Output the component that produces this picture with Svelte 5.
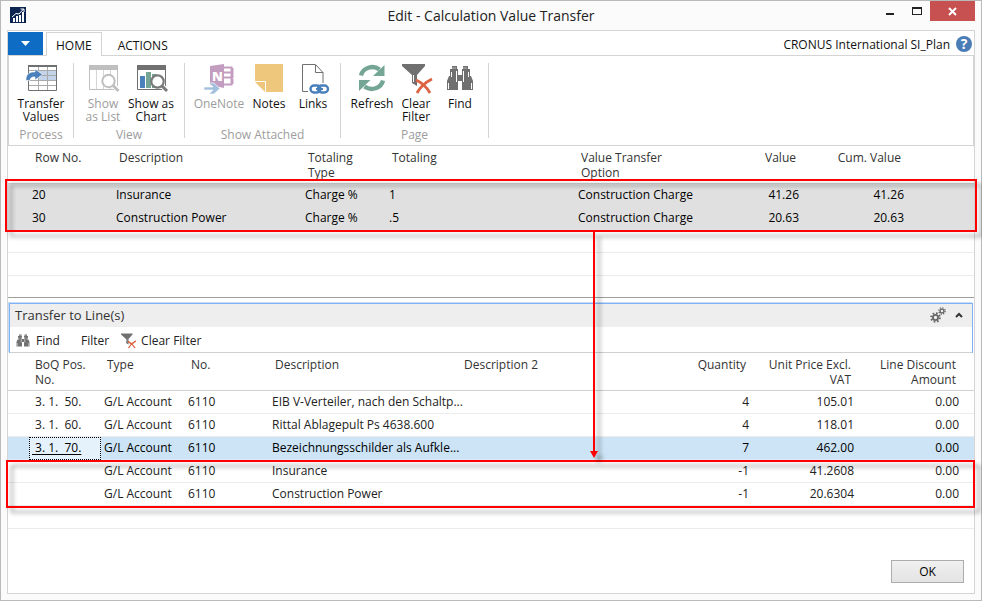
<script>
  const charges = [
    { row: '20', desc: 'Insurance', type: 'Charge %', totaling: '1', option: 'Construction Charge', value: '41.26', cum: '41.26' },
    { row: '30', desc: 'Construction Power', type: 'Charge %', totaling: '.5', option: 'Construction Charge', value: '20.63', cum: '20.63' }
  ];
  const lines = [
    { pos: ' 3. 1.  50.', type: 'G/L Account', no: '6110', desc: 'EIB V-Verteiler, nach den Schaltp...', qty: '4', price: '105.01', disc: '0.00' },
    { pos: ' 3. 1.  60.', type: 'G/L Account', no: '6110', desc: 'Rittal Ablagepult Ps 4638.600', qty: '4', price: '118.01', disc: '0.00' },
    { pos: ' 3. 1.  70.', type: 'G/L Account', no: '6110', desc: 'Bezeichnungsschilder als Aufkle...', qty: '7', price: '462.00', disc: '0.00', active: true },
    { pos: '', type: 'G/L Account', no: '6110', desc: 'Insurance', qty: '-1', price: '41.2608', disc: '0.00' },
    { pos: '', type: 'G/L Account', no: '6110', desc: 'Construction Power', qty: '-1', price: '20.6304', disc: '0.00' }
  ];
  const groups = [
    { name: 'Process', kind: 'process', items: [{ icon: 'transfer', label: ['Transfer', 'Values'] }] },
    { name: 'View', kind: 'view', items: [
      { icon: 'list', label: ['Show', 'as List'], disabled: true },
      { icon: 'chart', label: ['Show as', 'Chart'] }
    ] },
    { name: 'Show Attached', kind: 'attached', items: [
      { icon: 'onenote', label: ['OneNote'], disabled: true },
      { icon: 'notes', label: ['Notes'] },
      { icon: 'links', label: ['Links'] }
    ] },
    { name: 'Page', kind: 'page', items: [
      { icon: 'refresh', label: ['Refresh'] },
      { icon: 'clear', label: ['Clear', 'Filter'] },
      { icon: 'find', label: ['Find'] }
    ] }
  ];
</script>

{#snippet icon(name, size)}
  <svg width={size} height={size} viewBox="0 0 32 32" aria-hidden="true">
    {#if name === 'transfer'}
      <path d="M13 7h18v10H13z" fill="#c3d4ea" />
      <path d="M4 7.500h27M4 12.500h27M4 17.500h27M4 22.500h27M13.500 3v24M22.500 3v24" stroke="#a9a9a9" fill="none" />
      <path d="M3.500 2.500h28v25h-28z" stroke="#707070" fill="none" />
      <path d="M3 3h29" stroke="#707070" stroke-width="2" />
      <path d="M1 17.500C.5 11 5 8.500 10 9V6l7.500 5.500L10 17v-3c-3-.5-5 .8-5 3.500z" fill="#4a80bb" stroke="#fff" stroke-width=".6" />
    {:else if name === 'list'}
      <path d="M2.500 2.500h28v24h-28z" stroke="#bfbfbf" fill="#fff" />
      <path d="M2 2h29v5H2z" fill="#bfbfbf" />
      <path d="M9.500 7v19M16.500 7v19M23.500 7v19" stroke="#d6d6d6" />
      <path d="M25.500 21.500l7 7" stroke="#fff" stroke-width="5" />
      <circle cx="21.500" cy="18" r="6.200" fill="#fff" stroke="#bfbfbf" stroke-width="2" />
      <path d="M26 22.500l5.500 5.500" stroke="#bfbfbf" stroke-width="3" />
    {:else if name === 'chart'}
      <path d="M2.500 2.500h28v24h-28z" stroke="#707070" fill="#fff" />
      <path d="M2 2h29v5H2z" fill="#707070" />
      <path d="M5 13h5v12H5z" fill="#4a80bb" />
      <path d="M11 9h5v16h-5zM17 11h5v14h-5z" fill="#75a695" />
      <path d="M26 22l6 6" stroke="#fff" stroke-width="5" />
      <circle cx="22.500" cy="18.500" r="6.200" fill="#fff" stroke="#7a7a7a" stroke-width="2.200" />
      <path d="M27 23l5 5" stroke="#7a7a7a" stroke-width="3" />
    {:else if name === 'onenote'}
      <path d="M21 4.500h7.500v17H21M21 9.500h9.500M21 14.500h9.500M29.500 5v4M29.500 10v4M29.500 16v5" fill="none" stroke="#c39dc0" stroke-width="2" />
      <path d="M7 3l14-2v24L7 22z" fill="#c39dc0" />
      <text x="9" y="18" font-family="Open Sans, sans-serif" font-size="13" font-weight="800" fill="#fff">N</text>
      <path d="M1 24h9l-4-4h5l6 5.500-6 5.500H6l4-4H1z" fill="#a4c0df" stroke="#fff" stroke-width=".6" />
    {:else if name === 'notes'}
      <path d="M2 1h28v28H2z" fill="#eec77c" />
      <path d="M2 18.500h10.500V29" stroke="#fff" fill="none" />
      <path d="M2 19l10 10H2z" fill="#fff" />
      <path d="M3 19h9v9z" fill="#eec77c" />
    {:else if name === 'links'}
      <path d="M11 28.500H5.500v-27h13l7.500 8V20M18.500 2v7.500H26" fill="none" stroke="#707070" />
      <g fill="none" stroke="#4a80bb" stroke-width="2.400">
        <rect x="13.500" y="22.500" width="10" height="7" rx="3.500" />
        <rect x="21" y="22.500" width="10" height="7" rx="3.500" />
      </g>
      <path d="M19 26h7" stroke="#4a80bb" stroke-width="2" />
    {:else if name === 'refresh'}
      <path d="M5 12.500A11.500 10.500 0 0 1 23.500 6.500" fill="none" stroke="#75a695" stroke-width="4.400" />
      <path d="M28.500 2v11H17z" fill="#75a695" />
      <path d="M27 17.500A11.500 10.500 0 0 1 8.500 23.500" fill="none" stroke="#75a695" stroke-width="4.400" />
      <path d="M3 28V17h11.500z" fill="#75a695" />
    {:else if name === 'clear'}
      <path d="M2 1h23v2l-8 9v11l-5-3v-8L2 3z" fill="#707070" />
      <path d="M13.500 12v7" stroke="#fff" />
      <path d="M16 17q9 4 14 13M32 16q-10 5-15 14" fill="none" stroke="#dc6443" stroke-width="2.800" />
    {:else if name === 'find'}
      <path d="M8 3h5v3h1v6h4V6h1V3h5v3h2v7h1l2 5v9H18v-9h-4v9H3v-9l2-5h1V6h2z" fill="#707070" />
      <path d="M4.500 20v6M27.500 20v6M7.500 9v5M24.500 9v5M12.500 8v11M19.500 8v11" stroke="#fff" />
      <path d="M8.500 5h4M19.500 5h4" stroke="#fff" stroke-dasharray="1 1" />
    {/if}
  </svg>
{/snippet}

<div class="window">
  <header class="titlebar">
    <svg class="logo" width="16" height="16" viewBox="0 0 16 16" aria-hidden="true">
      <path d="M0 0h16v16H0z" fill="#0b2450" />
      <path d="M3 11h2v4H3zM6 9h2v6H6zM9 8h2v7H9zM12 5h2v10h-2z" fill="#fff" />
      <path d="M2 10l4-3.500 3 .5 4.500-5M10.500 2H14v3" stroke="#fff" fill="none" />
    </svg>
    <h1>Edit - Calculation Value Transfer</h1>
    <div class="controls">
      <button aria-label="Minimize"><svg width="10" height="10"><path d="M1 7h8v2H1z" fill="#222" /></svg></button>
      <button aria-label="Maximize"><svg width="10" height="10"><path d="M0 1h10v8H0zM1 3v5h8V3z" fill="#222" fill-rule="evenodd" /></svg></button>
      <button class="close" aria-label="Close"><svg width="9" height="9"><path d="M1 1l7 7M8 1L1 8" stroke="#fff" stroke-width="2" /></svg></button>
    </div>
  </header>

  <main class="panel">
    <nav class="tabs">
      <button class="menu" aria-label="Application menu"><svg width="9" height="5"><path d="M0 0h9L4.500 5z" fill="#fff" /></svg></button>
      <button class="tab current">HOME</button>
      <button class="tab">ACTIONS</button>
      <span class="company">CRONUS International SI_Plan</span>
      <button class="help" aria-label="Help">?</button>
    </nav>

    <div class="ribbon">
      {#each groups as group}
        <section class="group {group.kind}">
          <div class="commands">
            {#each group.items as item}
              <button class="command {item.icon}" disabled={item.disabled}>
                {@render icon(item.icon, 32)}
                <span>{item.label[0]}{#if item.label[1]}<br />{item.label[1]}{/if}</span>
              </button>
            {/each}
          </div>
          <div class="caption">{group.name}</div>
        </section>
      {/each}
    </div>

    <div class="charges">
      <table>
        <colgroup><col class="w-lead" /><col class="w-s" /><col class="w-l" /><col class="w-s" /><col class="w-l" /><col class="w-m" /><col class="w-value" /><col class="w-m" /><col /></colgroup>
        <thead>
          <tr><th></th><th>Row No.</th><th>Description</th><th>Totaling<br />Type</th><th>Totaling</th><th>Value Transfer<br />Option</th><th class="num">Value</th><th class="num">Cum. Value</th><th></th></tr>
        </thead>
        <tbody>
          {#each charges as c}
            <tr class="marked"><td></td><td>{c.row}</td><td>{c.desc}</td><td>{c.type}</td><td>{c.totaling}</td><td>{c.option}</td><td class="num">{c.value}</td><td class="num">{c.cum}</td><td></td></tr>
          {/each}
          <tr><td colspan="9"></td></tr>
          <tr><td colspan="9"></td></tr>
          <tr class="last"><td colspan="9"></td></tr>
        </tbody>
      </table>
      <div class="callout source"></div>
      <svg class="arrow" width="8" height="226" aria-hidden="true"><path d="M3 0h2v219h3l-4 7-4-7h3z" fill="#f00" /></svg>
    </div>

    <section class="part">
      <div class="part-head">
        <div class="part-title">
          <h2>Transfer to Line(s)</h2>
          <button aria-label="Customize">
            <svg width="16" height="16" viewBox="0 0 16 16" fill="none" stroke="#666">
              <circle cx="5.500" cy="10.500" r="2.600" stroke-width="1.800" />
              <circle cx="5.500" cy="10.500" r="4.400" stroke-width="1.800" stroke-dasharray="1.700 1.755" />
              <circle cx="12" cy="4" r="1.900" stroke-width="1.300" />
              <circle cx="12" cy="4" r="3.200" stroke-width="1.300" stroke-dasharray="1.250 1.263" />
            </svg>
          </button>
          <button aria-label="Collapse"><svg width="8" height="6"><path d="M1 5l3-3 3 3" stroke="#333" stroke-width="2" fill="none" /></svg></button>
        </div>
        <div class="toolbar">
          <button class="t-find">{@render icon('find', 16)}Find</button>
          <button class="t-filter">Filter</button>
          <button>{@render icon('clear', 16)}Clear Filter</button>
        </div>
      </div>
      <table>
        <colgroup><col class="w-lead" /><col class="w-pos" /><col class="w-s" /><col class="w-s" /><col class="w-l" /><col class="w-l" /><col class="w-m" /><col class="w-m" /><col class="w-m" /><col /></colgroup>
        <thead>
          <tr><th></th><th>BoQ Pos.<br />No.</th><th>Type</th><th>No.</th><th>Description</th><th>Description 2</th><th class="num">Quantity</th><th class="num">Unit Price Excl.<br />VAT</th><th class="num">Line Discount<br />Amount</th><th></th></tr>
        </thead>
        <tbody>
          {#each lines as l}
            <tr class:active={l.active}>
              <td></td>
              <td class="pos">{#if l.active}<a href="#line">{l.pos}</a>{:else}{l.pos}{/if}</td>
              <td>{l.type}</td><td>{l.no}</td><td>{l.desc}</td><td></td>
              <td class="num">{l.qty}</td><td class="num">{l.price}</td><td class="num">{l.disc}</td><td></td>
            </tr>
          {/each}
          <tr><td colspan="10"></td></tr>
        </tbody>
      </table>
      <div class="callout target"></div>
    </section>

    <footer><button class="ok">OK</button></footer>
  </main>
</div>

<style>
  :global(body) { margin: 0; }
  .window {
    box-sizing: border-box;
    min-height: 100vh;
    display: flex;
    flex-direction: column;
    padding: 0 6px 6px;
    border: 1px solid #b9b9b9;
    background: #fbfbfb;
    font-family: "Open Sans", "Noto Sans", sans-serif;
    font-size: 12px;
    color: #222;
  }
  button {
    margin: 0;
    padding: 0;
    border: 0;
    background: none;
    font: inherit;
    color: inherit;
  }
  svg { display: block; }

  .titlebar {
    display: grid;
    grid-template-columns: 1fr auto 1fr;
    height: 29px;
  }
  .logo { margin: 6px 0 0 3px; }
  h1 {
    margin: 0;
    font-size: 14px;
    font-weight: 400;
    line-height: 29px;
  }
  .controls {
    display: flex;
    justify-content: flex-end;
    align-items: flex-start;
  }
  .controls button {
    display: flex;
    align-items: center;
    justify-content: center;
    width: 27px;
    height: 20px;
  }
  .controls .close {
    width: 45px;
    background: #c75050;
  }

  .panel {
    flex: 1;
    display: flex;
    flex-direction: column;
    border: 1px solid #d4d4d4;
    background: #fff;
  }
  .tabs {
    display: flex;
    align-items: flex-end;
    height: 24px;
    color: #111;
  }
  .menu {
    display: flex;
    align-items: center;
    justify-content: center;
    width: 35px;
    height: 23px;
    margin-right: 3px;
    background: #0f6cc5;
  }
  .tab {
    height: 24px;
    padding: 4px 16px 0;
  }
  .tab.current {
    position: relative;
    box-sizing: border-box;
    padding: 2px 9px 0;
    margin-bottom: -1px;
    border: 1px solid #d4d4d4;
    border-bottom: 0;
    background: #fff;
  }
  .company {
    margin-left: auto;
    line-height: 20px;
  }
  .help {
    width: 16px;
    height: 16px;
    margin: 0 2px 3px 6px;
    border-radius: 50%;
    background: #4a7db5;
    color: #fff;
    font-size: 14px;
    font-weight: 700;
    line-height: 16px;
  }

  .ribbon {
    display: flex;
    border: 1px solid #d4d4d4;
    color: #111;
  }
  .group {
    display: flex;
    flex-direction: column;
    height: 75px;
    margin: 7px 0;
    border-right: 1px solid #d4d4d4;
  }
  .commands {
    display: flex;
    flex: none;
    height: 64px;
  }
  .process { width: 64px; }
  .view .commands { padding: 0 9px 0 5px; }
  .attached .commands { padding: 0 5px 0 6px; }
  .page .commands { padding: 0 6px 0 9px; }
  .command {
    display: flex;
    flex-direction: column;
    align-items: center;
    width: 44px;
    line-height: 13px;
    white-space: nowrap;
  }
  .command svg { margin-bottom: 2px; overflow: visible; }
  .command.transfer { width: 64px; }
  .command.list, .command.chart { width: 48px; }
  .command.onenote { width: 56px; }
  .command:disabled, .caption { color: #9d9d9d; }
  .caption {
    line-height: 16px;
    text-align: center;
  }

  table {
    width: 100%;
    table-layout: fixed;
    border-collapse: separate;
    border-spacing: 0;
  }
  .w-lead { width: 21px; }
  .w-pos { width: 72px; }
  .w-s { width: 84px; }
  .w-l { width: 189px; }
  .w-m { width: 105px; }
  .w-value { width: 122px; }
  th {
    box-sizing: border-box;
    height: 38px;
    padding: 4px 6px 3px;
    border-bottom: 1px solid #d0d0d0;
    color: #333;
    font-weight: 400;
    line-height: 15px;
    text-align: left;
    vertical-align: top;
    white-space: nowrap;
  }
  td {
    box-sizing: border-box;
    height: 23px;
    padding: 0 3px;
    border-bottom: 1px solid #ececec;
    line-height: 22px;
    white-space: nowrap;
  }
  .num { text-align: right; }
  .charges, .part { position: relative; }
  .marked td {
    background: #e0e0e0;
    border-color: #e0e0e0;
    color: #000;
  }
  .last td {
    height: 22px;
    border-color: #a0a0a0;
  }

  .callout {
    position: absolute;
    box-sizing: border-box;
    border: 2px solid #f00;
    filter: drop-shadow(5px 5px 2px rgba(0, 0, 0, 0.35));
    pointer-events: none;
  }
  .source {
    top: 33px;
    left: -3px;
    right: -3px;
    height: 53px;
  }
  .arrow {
    position: absolute;
    z-index: 1;
    top: 86px;
    left: 582px;
    overflow: visible;
    filter: drop-shadow(5px 5px 2px rgba(0, 0, 0, 0.35));
  }
  .target {
    top: 158px;
    left: -2px;
    right: -1px;
    height: 48px;
  }

  .part { margin-top: 4px; }
  .part-head {
    margin: 1px 1px 0;
    border: 1px solid #7eb0f5;
    border-bottom: 0;
    box-shadow: -1px -1px 0 #c9dcf5;
  }
  .part-title {
    display: flex;
    align-items: center;
    gap: 9px;
    box-sizing: border-box;
    height: 23px;
    padding: 0 9px 2px 5px;
    background: #eee;
  }
  h2 {
    flex: 1;
    margin: 0;
    color: #333;
    font-size: 13px;
    font-weight: 400;
  }
  .toolbar {
    display: flex;
    box-sizing: border-box;
    height: 26px;
    padding: 2px 5px 0;
    border-bottom: 1px solid #d0d0d0;
  }
  .toolbar button {
    display: flex;
    align-items: center;
    gap: 5px;
  }
  .toolbar .t-find { margin-right: 21px; }
  .toolbar .t-filter { margin-right: 11px; }
  .pos { white-space: pre; }
  .active td {
    background: #cce4f6;
    border-color: #dcebf7;
    color: #000;
  }
  .active .pos {
    background: #e6f2fb;
    outline: 1px dotted #000;
    outline-offset: -1px;
  }
  .pos a { color: inherit; text-underline-offset: 2px; }

  footer {
    display: flex;
    justify-content: flex-end;
    margin-top: auto;
    padding: 10px;
  }
  .ok {
    width: 73px;
    height: 23px;
    border: 1px solid #adadad;
    background: linear-gradient(#f0f0f0, #e3e3e3);
    color: #000;
  }
</style>
